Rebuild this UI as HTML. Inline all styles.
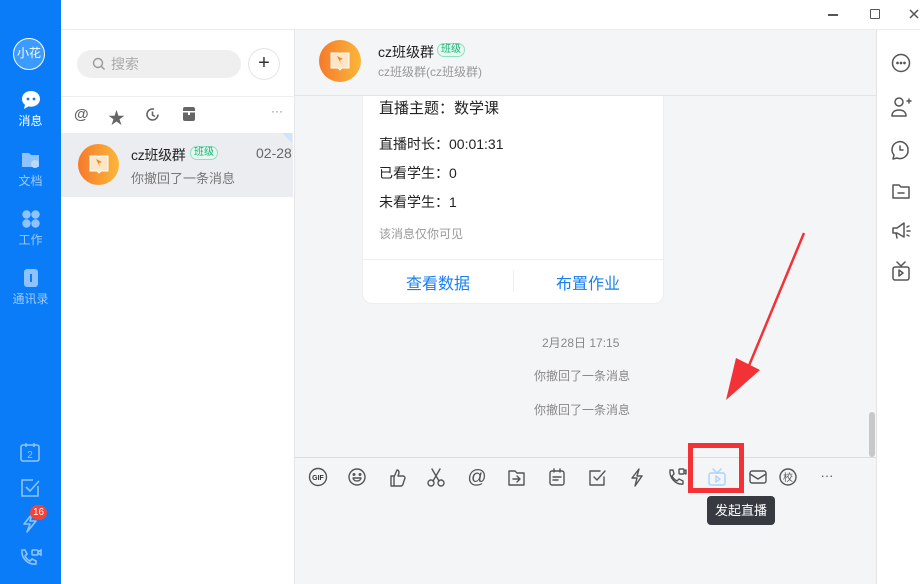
<!DOCTYPE html>
<html><head><meta charset="utf-8"><style>
*{box-sizing:border-box;margin:0;padding:0}
body{width:920px;height:584px;overflow:hidden;position:relative;background:#fff;font-family:"Liberation Sans","Noto Sans CJK SC",sans-serif;}
.abs{position:absolute}
.side{left:0;top:0;width:61px;height:584px;background:#0a7cf8}
.nav{position:absolute;left:0;width:61px;text-align:center;color:#9ccbff;font-size:12px}
.nav svg{display:block;margin:0 auto 2px}
.list{left:61px;top:30px;width:234px;height:554px;background:#fff;border-right:1px solid #e6e6e6}
.chat{left:295px;top:30px;width:581px;height:554px;background:#f4f5f7}
.right{left:876px;top:30px;width:44px;height:554px;background:#fff;border-left:1px solid #e3e3e3}
</style></head><body>
<div class="abs side"></div>
<div class="abs" style="left:13px;top:38px;width:32px;height:32px;border-radius:50%;background:#3b9bff;border:1.5px solid #fff;color:#fff;font-size:12px;text-align:center;line-height:29px">小花</div>
<div class="nav" style="top:90px;color:#fff"><svg width="22" height="20" viewBox="0 0 22 20"><path d="M11 1C5.5 1 2 4.5 2 9c0 2.5 1.2 4.5 3 5.8L4 19l4.5-2.6c.8.2 1.6.3 2.5.3 5.5 0 9-3.5 9-7.8S16.5 1 11 1z" fill="#fff"/><circle cx="8" cy="9" r="1.4" fill="#0a7cf8"/><circle cx="14" cy="9" r="1.4" fill="#0a7cf8"/></svg>消息</div>
<div class="nav" style="top:150px"><svg width="22" height="20" viewBox="0 0 22 20"><path d="M2 3h7l2 2h8v12H2z" fill="#8fc3ff"/><circle cx="15" cy="14" r="4" fill="#b8daff"/></svg>文档</div>
<div class="nav" style="top:209px"><svg width="20" height="20" viewBox="0 0 20 20" fill="#8fc3ff"><circle cx="5.5" cy="5.5" r="4.2"/><circle cx="14.5" cy="5.5" r="4.2"/><circle cx="5.5" cy="14.5" r="4.2"/><circle cx="14.5" cy="14.5" r="4.2"/></svg>工作</div>
<div class="nav" style="top:268px"><svg width="20" height="20" viewBox="0 0 20 20"><rect x="3" y="1" width="14" height="18" rx="3" fill="#8fc3ff"/><rect x="9" y="6" width="2" height="8" fill="#0a7cf8"/></svg>通讯录</div>
<svg class="abs" style="left:19px;top:441px" width="22" height="22" viewBox="0 0 22 22" fill="none" stroke="#8fc3ff" stroke-width="1.6"><rect x="2" y="4" width="18" height="16" rx="2"/><path d="M7 2v4M15 2v4"/><text x="11" y="17" font-size="10" fill="#8fc3ff" stroke="none" text-anchor="middle" font-family="Liberation Sans">2</text></svg>
<svg class="abs" style="left:19px;top:477px" width="22" height="22" viewBox="0 0 22 22" fill="none" stroke="#8fc3ff" stroke-width="1.6"><path d="M19 9v10H3V3h11"/><path d="M7 10l4 4 9-10"/></svg>
<svg class="abs" style="left:20px;top:512px" width="20" height="22" viewBox="0 0 20 22" fill="none" stroke="#8fc3ff" stroke-width="1.6" stroke-linejoin="round"><path d="M12 2L4 12h6l-3 8 9-11h-6z"/></svg>
<div class="abs" style="left:30px;top:505px;width:17px;height:15px;border-radius:8px;background:#f44336;color:#fff;font-size:10px;text-align:center;line-height:15px">16</div>
<svg class="abs" style="left:18px;top:547px" width="24" height="22" viewBox="0 0 24 22" fill="none" stroke="#8fc3ff" stroke-width="1.6"><path d="M4 3l3 0 2 4-2 2c1 2 3 4 5 5l2-2 4 2v3c-8 1-15-6-14-14z"/><rect x="14" y="3" width="6" height="5" rx="1"/><path d="M20 5l3-2v5l-3-2"/></svg>

<div class="abs" style="left:61px;top:0;width:859px;height:30px;background:#fff;border-bottom:1px solid #ececec"></div>
<div class="abs" style="left:828px;top:14px;width:10px;height:1.5px;background:#555"></div>
<div class="abs" style="left:870px;top:9px;width:10px;height:10px;border:1.5px solid #555;border-radius:1px"></div>
<svg class="abs" style="left:909px;top:9px" width="10" height="10" viewBox="0 0 10 10" stroke="#555" stroke-width="1.5"><path d="M1 1l8 8M9 1l-8 8"/></svg>

<div class="abs list"></div>
<div class="abs" style="left:77px;top:50px;width:164px;height:28px;background:#efefef;border-radius:14px;color:#aaa;font-size:14px;line-height:28px;padding-left:34px">搜索</div>
<svg class="abs" style="left:92px;top:57px" width="14" height="14" viewBox="0 0 14 14" fill="none" stroke="#999" stroke-width="1.4"><circle cx="6" cy="6" r="4.5"/><path d="M9.5 9.5l3 3"/></svg>
<div class="abs" style="left:248px;top:48px;width:32px;height:32px;border-radius:50%;border:1px solid #e5e5e5;text-align:center;line-height:29px;font-size:20px;color:#333">+</div>
<div class="abs" style="left:61px;top:96px;width:234px;height:1px;background:#eee"></div>
<div class="abs" style="left:74px;top:106px;font-size:15px;color:#666;font-weight:bold">@</div>
<div class="abs" style="left:108px;top:104px;font-size:17px;color:#666">★</div>
<svg class="abs" style="left:145px;top:107px" width="15" height="15" viewBox="0 0 15 15" fill="none" stroke="#666" stroke-width="1.6"><path d="M13 7.5A5.5 5.5 0 1 1 9 2.2"/><path d="M7.5 4.5v3.5l2.5 1.5"/></svg>
<svg class="abs" style="left:182px;top:106px" width="14" height="16" viewBox="0 0 14 16"><rect x="1" y="1" width="12" height="14" rx="2" fill="#666"/><rect x="1" y="5" width="12" height="1.5" fill="#fff"/><rect x="6" y="6" width="2" height="3" fill="#fff"/></svg>
<div class="abs" style="left:271px;top:104px;font-size:12px;color:#888">···</div>
<div class="abs" style="left:61px;top:133px;width:232px;height:64px;background:#ecedf0"></div>
<div class="abs" style="left:282px;top:133px;width:0;height:0;border-left:10px solid transparent;border-top:10px solid #cfe4ff"></div>
<div class="abs" style="left:78px;top:144px;width:41px;height:41px;border-radius:50%;background:linear-gradient(90deg,#f57a2c,#fbb73a)"></div>
<svg class="abs" style="left:88px;top:154px" width="22" height="20" viewBox="0 0 22 20"><path d="M2 2h8l1 1 1-1h8v15h-7l-2 2-2-2H2z" fill="#fde6c8" stroke="#fff" stroke-width="1"/><path d="M8 5l6 3-3 1 1 4z" fill="#e8871e"/></svg>
<div class="abs" style="left:131px;top:145px;font-size:14px;color:#222;letter-spacing:-0.3px">cz班级群</div>
<div class="abs" style="left:190px;top:146px;font-size:10px;color:#1bb37a;border:1px solid #8fe0bf;background:#e6f8ef;border-radius:8px;padding:0 3px;line-height:12px">班级</div>
<div class="abs" style="left:256px;top:145px;font-size:14px;color:#666">02-28</div>
<div class="abs" style="left:131px;top:168px;font-size:13px;color:#777">你撤回了一条消息</div>

<div class="abs chat"></div>
<div class="abs" style="left:295px;top:30px;width:581px;height:66px;background:#f4f5f7;border-bottom:1px solid #e3e3e3;z-index:2"></div>
<div class="abs" style="left:319px;top:40px;width:42px;height:42px;border-radius:50%;background:linear-gradient(90deg,#f57a2c,#fbb73a);z-index:3"></div>
<svg class="abs" style="left:329px;top:51px;z-index:3" width="22" height="20" viewBox="0 0 22 20"><path d="M2 2h8l1 1 1-1h8v15h-7l-2 2-2-2H2z" fill="#fde6c8" stroke="#fff"/><path d="M8 5l6 3-3 1 1 4z" fill="#e8871e"/></svg>
<div class="abs" style="left:378px;top:42px;font-size:14px;color:#222;z-index:3">cz班级群</div>
<div class="abs" style="left:437px;top:43px;font-size:10px;color:#1bb37a;border:1px solid #8fe0bf;background:#e6f8ef;border-radius:8px;padding:0 3px;line-height:12px;z-index:3">班级</div>
<div class="abs" style="left:378px;top:63px;font-size:12px;color:#999;z-index:3">cz班级群(cz班级群)</div>

<div class="abs" style="left:362px;top:80px;width:302px;height:224px;background:#fff;border-radius:10px;border:1px solid #eee"></div>
<div class="abs" style="left:379px;top:97px;font-size:15px;color:#222">直播主题：数学课</div>
<div class="abs" style="left:379px;top:134px;font-size:14px;color:#222">直播时长：00:01:31</div>
<div class="abs" style="left:379px;top:163px;font-size:14px;color:#222">已看学生：0</div>
<div class="abs" style="left:379px;top:192px;font-size:14px;color:#222">未看学生：1</div>
<div class="abs" style="left:379px;top:225px;font-size:12px;color:#999">该消息仅你可见</div>
<div class="abs" style="left:363px;top:259px;width:300px;height:1px;background:#eee"></div>
<div class="abs" style="left:513px;top:270px;width:1px;height:22px;background:#eee"></div>
<div class="abs" style="left:406px;top:270px;font-size:16px;color:#1a7ff0">查看数据</div>
<div class="abs" style="left:556px;top:270px;font-size:16px;color:#1a7ff0">布置作业</div>
<div class="abs" style="left:542px;top:334px;font-size:12px;color:#888">2月28日 17:15</div>
<div class="abs" style="left:534px;top:367px;font-size:12px;color:#888">你撤回了一条消息</div>
<div class="abs" style="left:534px;top:401px;font-size:12px;color:#888">你撤回了一条消息</div>
<div class="abs" style="left:869px;top:412px;width:6px;height:45px;background:#c8c8c8;border-radius:3px"></div>
<div class="abs" style="left:295px;top:457px;width:581px;height:1px;background:#dcdcdc"></div>

<svg class="abs" style="left:306px;top:465px" width="530" height="24" viewBox="0 0 530 24" fill="none" stroke="#555" stroke-width="1.4" stroke-linecap="round" stroke-linejoin="round">
<circle cx="12" cy="12" r="8.5"/><text x="12" y="15" font-size="7" fill="#333" stroke="none" text-anchor="middle" font-family="Liberation Sans" font-weight="bold">GIF</text>
<g transform="translate(51,0)"><circle cx="0" cy="12" r="8"/><circle cx="-3" cy="9.5" r=".8" fill="#555"/><circle cx="3" cy="9.5" r=".8" fill="#555"/><path d="M-4 13h8c-1 4-7 4-8 0z"/></g>
<g transform="translate(82,3)"><path d="M3 8h3v10H3zM6 9l3-7c2 0 2 2 2 3l-1 3h5c1 0 2 1 2 2l-2 6c-.3 1-1 2-2 2H6"/></g>
<g transform="translate(122,3)"><circle cx="3" cy="15" r="3"/><circle cx="13" cy="15" r="3"/><path d="M5 13L12 1M11 13L4 1"/></g>
<g transform="translate(160,0)"><text x="11" y="18" font-size="19" fill="#555" stroke="none" text-anchor="middle" font-family="Liberation Sans">@</text></g>
<g transform="translate(202,4)"><path d="M1 2h6l2 2h7v12H1z"/><path d="M5 10h7M9 7l3 3-3 3"/></g>
<g transform="translate(243,4)"><rect x="1" y="2" width="14" height="14" rx="2"/><path d="M5 0v3M11 0v3M4 8h8M4 11h5"/></g>
<g transform="translate(283,4)"><path d="M15 8v8H1V2h10"/><path d="M5 8l3 3 8-9"/></g>
<g transform="translate(323,3)"><path d="M10 1L3 10h5l-2 8 7-10H8z"/></g>
<g transform="translate(362,3)"><path d="M2 2h3l1 4-2 2c1 2 3 4 5 5l2-2 4 2v3c-7 1-14-6-13-14z"/><rect x="11" y="1" width="5" height="5" rx="1"/><path d="M16 3l2-1v4l-2-1"/></g>
<g transform="translate(402,4)" stroke="#a9d2ff"><rect x="1" y="4" width="16" height="12" rx="2"/><path d="M5 0l4 4 4-4M8 7v6l4-3z"/></g>
<g transform="translate(443,5)"><rect x="1" y="1" width="16" height="12" rx="2"/><path d="M1 4l8 5 8-5"/></g>
<circle cx="482" cy="12" r="8"/><text x="482" y="16" font-size="10" fill="#555" stroke="none" text-anchor="middle">校</text>
<text x="521" y="15" font-size="13" fill="#555" stroke="none" text-anchor="middle">···</text>
</svg>
<div class="abs" style="left:688px;top:443px;width:56px;height:50px;border:5px solid #f23236"></div>
<div class="abs" style="left:707px;top:496px;width:68px;height:29px;background:#373b41;border-radius:4px;color:#fff;font-size:13px;line-height:29px;text-align:center">发起直播</div>
<svg class="abs" style="left:720px;top:230px" width="90" height="175" viewBox="0 0 90 175"><path d="M84 3L28 138" stroke="#f23236" stroke-width="2.5"/><path d="M6 170L16 128 40 140z" fill="#f23236"/></svg>

<div class="abs right"></div>
<svg class="abs" style="left:890px;top:52px" width="22" height="240" viewBox="0 0 22 240" fill="none" stroke="#555" stroke-width="1.5" stroke-linecap="round" stroke-linejoin="round">
<circle cx="11" cy="11" r="8.5"/><circle cx="7.5" cy="11" r=".6" fill="#555"/><circle cx="11" cy="11" r=".6" fill="#555"/><circle cx="14.5" cy="11" r=".6" fill="#555"/>
<circle cx="9" cy="50" r="4"/><path d="M2 64c0-4 3-6 7-6s7 2 7 6zM17 49h4M19 47v4"/>
<path d="M18 98a8 8 0 1 0-14 5l-1 4 4-1a8 8 0 0 0 11-8z"/><path d="M10 94v4h3"/>
<path d="M3 133h6l2 2h8v11H3z"/><path d="M8 141h6"/>
<path d="M3 176h4l7-5v14l-7-4H3zM6 181l1 5M17 175l2-1M17 179h3M17 183l2 1"/>
<rect x="3" y="215" width="16" height="13" rx="2"/><path d="M7 210l4 4 4-4M9 218v6l4-3z"/>
</svg>
</body></html>
